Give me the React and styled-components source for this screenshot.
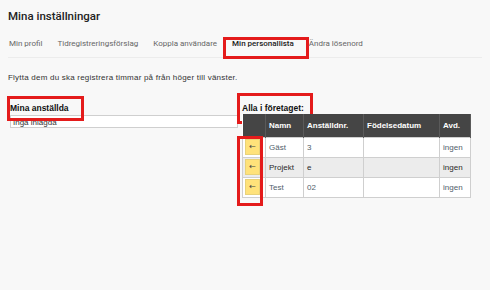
import styled, { createGlobalStyle } from 'styled-components';

const GlobalStyle = createGlobalStyle`
  html, body {
    margin: 0;
    padding: 0;
    background: #f8f8f8;
  }
  body {
    font-family: "Liberation Sans", Arial, sans-serif;
  }
  * {
    box-sizing: border-box;
  }
`;

const Page = styled.div`
  width: 490px;
  height: 290px;
  padding: 0 8px;
  background: #f8f8f8;
  overflow: hidden;
`;

const Title = styled.h1`
  margin: 0;
  padding-top: 8px;
  height: 24px;
  font-family: Roboto, Lato, sans-serif;
  font-size: 11.5px;
  font-weight: 500;
  color: #222;
  line-height: 16px;
`;

const Tabs = styled.nav`
  display: flex;
  gap: 15px;
  margin-top: 6px;
  padding-left: 1px;
  border-bottom: 1px solid #ececec;
  font-family: Roboto, Lato, sans-serif;
  font-size: 8px;
  line-height: 12px;
`;

const Tab = styled.span`
  position: relative;
  padding: 8px 0 6px;
  color: ${p => (p.$active ? '#222' : '#666')};
  font-weight: ${p => (p.$active ? 500 : 400)};
  border-bottom: 2px solid ${p => (p.$active ? '#fbdc5c' : 'transparent')};
  margin-bottom: -1px;

  ${p => p.$active && `
    &::after {
      content: '';
      position: absolute;
      left: -9px;
      right: -15px;
      top: 7px;
      height: 16px;
      border: 3px solid #e41b1b;
    }
  `}
`;

const Intro = styled.p`
  margin: 14px 0 0;
  font-size: 8px;
  letter-spacing: 0.22px;
  line-height: 12px;
  color: #333;
`;

const Columns = styled.div`
  display: grid;
  grid-template-columns: 228px 228px;
  column-gap: 4px;
  margin-top: 18px;
  padding-left: 2px;
`;

const Column = styled.div`
  display: flex;
  flex-direction: column;
`;

const Heading = styled.h2`
  position: relative;
  margin: 0;
  height: 12px;
  font-size: 8.5px;
  font-weight: 700;
  color: #111;
  line-height: 12px;

  &::after {
    content: '';
    position: absolute;
    left: ${p => p.$left}px;
    width: ${p => p.$width}px;
    top: ${p => p.$top}px;
    height: ${p => p.$height}px;
    border: 3px solid #e41b1b;
  }
`;

const EmptyBox = styled.div`
  margin-top: 1px;
  height: 13px;
  border: 1px solid #cfcfcf;
  background: #fff;
  font-size: 8px;
  line-height: 10px;
  padding: 2px 0 0 2px;
  color: #333;
`;

const TableWrap = styled.div`
  position: relative;
`;

const Table = styled.table`
  border-collapse: collapse;
  width: 228px;
  font-size: 8px;
  background: #fff;
  table-layout: fixed;
`;

const Th = styled.th`
  background: #454545;
  color: #fff;
  font-weight: 700;
  text-align: left;
  height: 23px;
  padding: 0 3px;
  border-right: 1px solid #5a5a5a;
  width: ${p => p.$w}px;
`;

const Tr = styled.tr`
  background: ${p => (p.$shade ? '#ececec' : '#fff')};
  color: ${p => (p.$shade ? '#2a2a2a' : '#51606b')};
`;

const Td = styled.td`
  height: 20px;
  padding: 0 3px;
  border: 1px solid #cfcfcf;
`;

const ButtonCell = styled(Td)`
  padding: 0 2px;
`;

const MoveButton = styled.button`
  display: block;
  width: 15px;
  height: 16px;
  padding: 0;
  border: 1px solid #e8d27a;
  background: #ffe27a;
  color: #444;
  font-size: 8px;
  line-height: 14px;
  font-family: "DejaVu Sans", sans-serif;
`;

const ButtonMark = styled.div`
  position: absolute;
  left: -5px;
  top: 22px;
  width: 26px;
  height: 70px;
  border: 3px solid #e41b1b;
  pointer-events: none;
`;

const rows = [
  { name: 'Gäst', nr: '3', dept: 'ingen' },
  { name: 'Projekt', nr: 'e', dept: 'ingen' },
  { name: 'Test', nr: '02', dept: 'ingen' },
];

export default function App() {
  return (
    <>
      <GlobalStyle />
      <Page>
        <Title>Mina inställningar</Title>
        <Tabs>
          <Tab>Min profil</Tab>
          <Tab>Tidregistreringsförslag</Tab>
          <Tab>Koppla användare</Tab>
          <Tab $active>Min personallista</Tab>
          <Tab>Ändra lösenord</Tab>
        </Tabs>
        <Intro>Flytta dem du ska registrera timmar på från höger till vänster.</Intro>
        <Columns>
          <Column>
            <Heading $left={-3} $width={71} $top={-6} $height={19}>Mina anställda</Heading>
            <EmptyBox>Inga inlagda</EmptyBox>
          </Column>
          <Column>
            <Heading $left={-5} $width={70} $top={-9} $height={25}>Alla i företaget:</Heading>
            <TableWrap>
              <Table>
                <thead>
                  <tr>
                    <Th $w={23} />
                    <Th $w={38}>Namn</Th>
                    <Th $w={60}>Anställdnr.</Th>
                    <Th $w={76}>Födelsedatum</Th>
                    <Th $w={31}>Avd.</Th>
                  </tr>
                </thead>
                <tbody>
                  {rows.map((r, i) => (
                    <Tr key={r.name} $shade={i === 1}>
                      <ButtonCell>
                        <MoveButton>←</MoveButton>
                      </ButtonCell>
                      <Td>{r.name}</Td>
                      <Td>{r.nr}</Td>
                      <Td />
                      <Td>{r.dept}</Td>
                    </Tr>
                  ))}
                </tbody>
              </Table>
              <ButtonMark />
            </TableWrap>
          </Column>
        </Columns>
      </Page>
    </>
  );
}
